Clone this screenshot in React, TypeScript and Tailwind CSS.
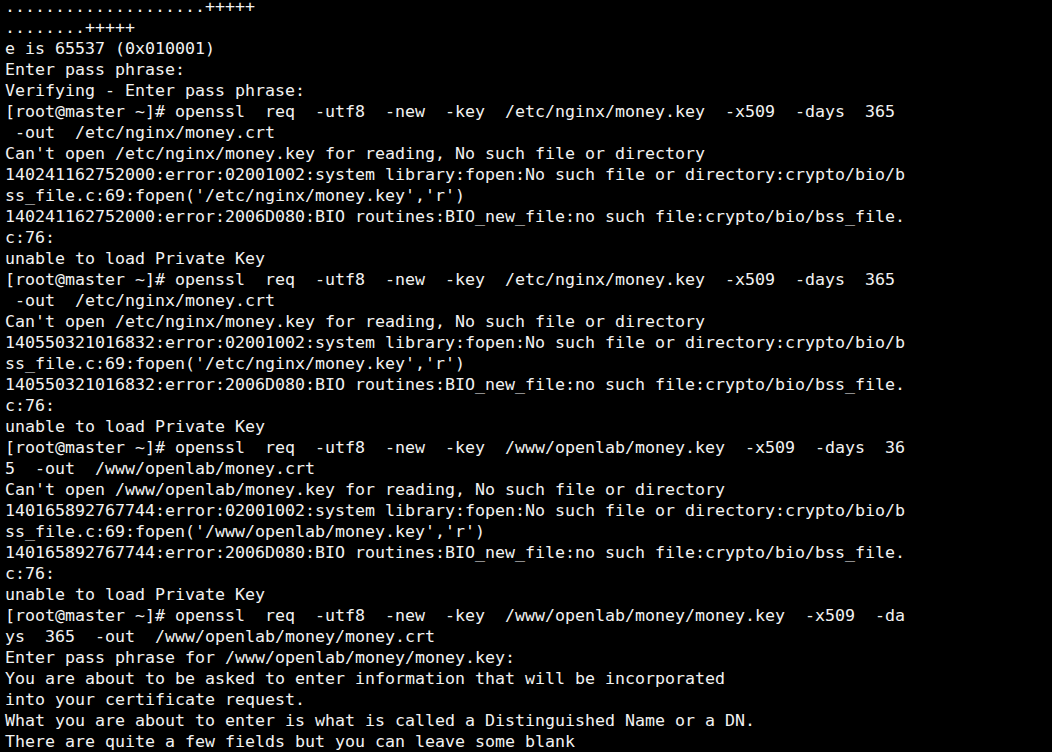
const lines = [
  "....................+++++",
  "........+++++",
  "e is 65537 (0x010001)",
  "Enter pass phrase:",
  "Verifying - Enter pass phrase:",
  "[root@master ~]# openssl  req  -utf8  -new  -key  /etc/nginx/money.key  -x509  -days  365",
  " -out  /etc/nginx/money.crt",
  "Can't open /etc/nginx/money.key for reading, No such file or directory",
  "140241162752000:error:02001002:system library:fopen:No such file or directory:crypto/bio/b",
  "ss_file.c:69:fopen('/etc/nginx/money.key','r')",
  "140241162752000:error:2006D080:BIO routines:BIO_new_file:no such file:crypto/bio/bss_file.",
  "c:76:",
  "unable to load Private Key",
  "[root@master ~]# openssl  req  -utf8  -new  -key  /etc/nginx/money.key  -x509  -days  365",
  " -out  /etc/nginx/money.crt",
  "Can't open /etc/nginx/money.key for reading, No such file or directory",
  "140550321016832:error:02001002:system library:fopen:No such file or directory:crypto/bio/b",
  "ss_file.c:69:fopen('/etc/nginx/money.key','r')",
  "140550321016832:error:2006D080:BIO routines:BIO_new_file:no such file:crypto/bio/bss_file.",
  "c:76:",
  "unable to load Private Key",
  "[root@master ~]# openssl  req  -utf8  -new  -key  /www/openlab/money.key  -x509  -days  36",
  "5  -out  /www/openlab/money.crt",
  "Can't open /www/openlab/money.key for reading, No such file or directory",
  "140165892767744:error:02001002:system library:fopen:No such file or directory:crypto/bio/b",
  "ss_file.c:69:fopen('/www/openlab/money.key','r')",
  "140165892767744:error:2006D080:BIO routines:BIO_new_file:no such file:crypto/bio/bss_file.",
  "c:76:",
  "unable to load Private Key",
  "[root@master ~]# openssl  req  -utf8  -new  -key  /www/openlab/money/money.key  -x509  -da",
  "ys  365  -out  /www/openlab/money/money.crt",
  "Enter pass phrase for /www/openlab/money/money.key:",
  "You are about to be asked to enter information that will be incorporated",
  "into your certificate request.",
  "What you are about to enter is what is called a Distinguished Name or a DN.",
  "There are quite a few fields but you can leave some blank",
];

export default function App() {
  return (
    <div className="w-[1052px] h-[752px] overflow-hidden bg-black">
      <div className="mt-[-4px] pl-[5px] font-['DejaVu_Sans_Mono',monospace] text-[16.62px] leading-[21px] text-[#f2f2f2] whitespace-pre">
        {lines.map((line, i) => (
          <div key={i}>{line || " "}</div>
        ))}
      </div>
    </div>
  );
}
